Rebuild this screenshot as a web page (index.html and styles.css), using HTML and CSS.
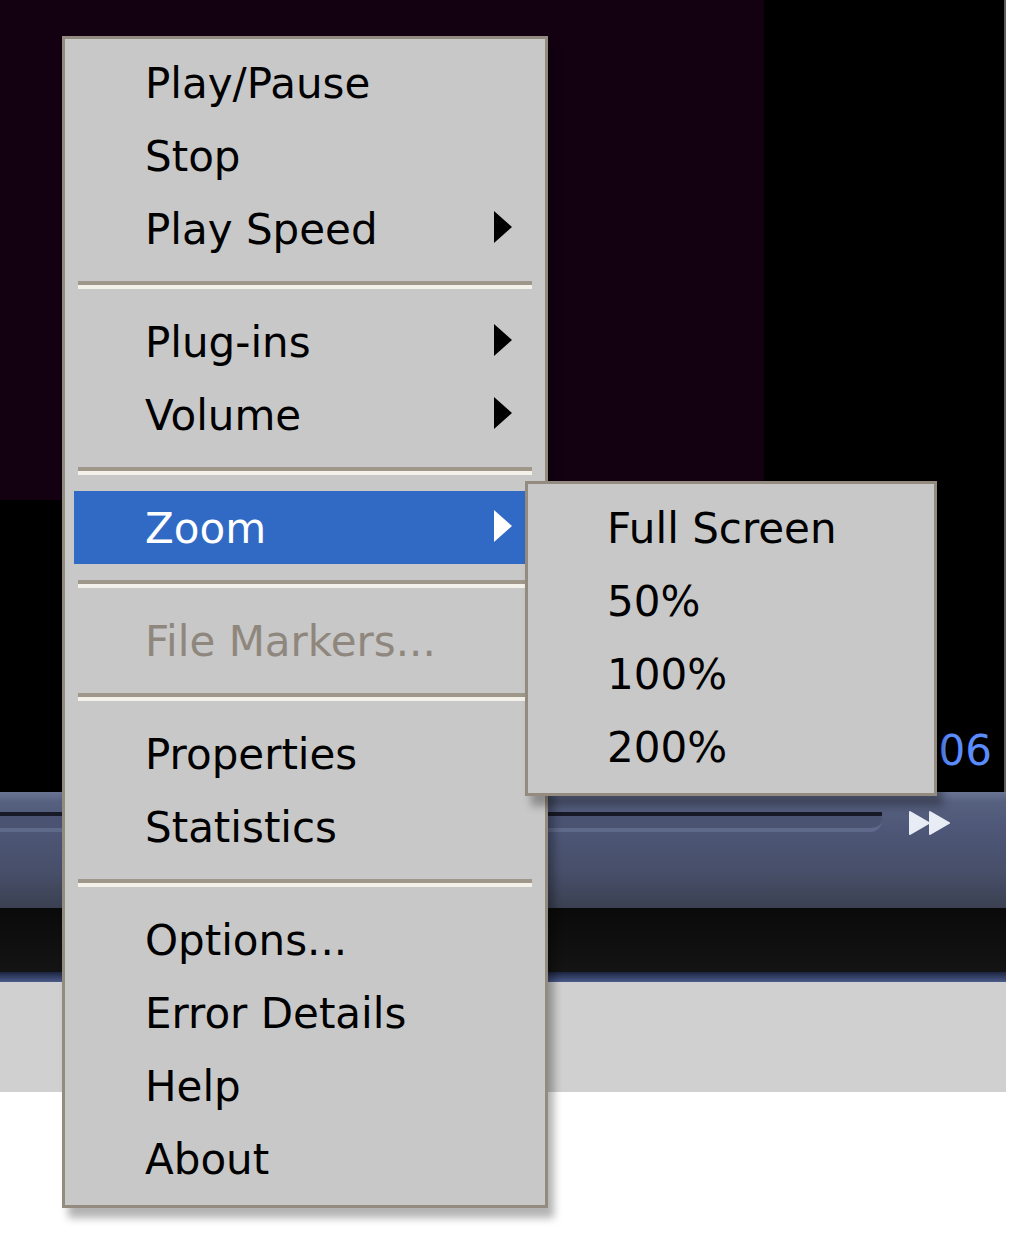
FILE: index.html
```html
<!DOCTYPE html>
<html lang="en">
<head>
    <meta charset="UTF-8">
    <meta name="viewport" content="width=device-width, initial-scale=1.0">
    <title>Player Menu</title>
    <link rel="stylesheet" href="styles.css">
</head>
<body>
    <!-- The player behind the menu -->
    <div class="player">
        <div class="screen">
            <div class="video"></div>
            <span class="time">00:06</span>
        </div>
        <div class="controls">
            <div class="seek"></div>
            <svg class="ff-icon" width="44" height="24" viewBox="0 0 44 24">
                <polygon points="2,1 21,12 2,23" fill="#e8ecf4" stroke="#e8ecf4" stroke-width="2" stroke-linejoin="round"/>
                <polygon points="22,1 41,12 22,23" fill="#e8ecf4" stroke="#e8ecf4" stroke-width="2" stroke-linejoin="round"/>
            </svg>
        </div>
        <div class="task-strip"></div>
        <div class="strip-edge"></div>
        <div class="status-area"></div>
    </div>

    <!-- Context menu -->
    <div class="menu main-menu">
        <div class="menu-item">Play/Pause</div>
        <div class="menu-item">Stop</div>
        <div class="menu-item has-sub">Play Speed
            <svg class="arrow" width="18" height="32" viewBox="0 0 18 32"><polygon points="0,0 18,16 0,32"/></svg>
        </div>
        <div class="separator"></div>
        <div class="menu-item has-sub">Plug-ins
            <svg class="arrow" width="18" height="32" viewBox="0 0 18 32"><polygon points="0,0 18,16 0,32"/></svg>
        </div>
        <div class="menu-item has-sub">Volume
            <svg class="arrow" width="18" height="32" viewBox="0 0 18 32"><polygon points="0,0 18,16 0,32"/></svg>
        </div>
        <div class="separator"></div>
        <div class="menu-item has-sub active">Zoom
            <svg class="arrow" width="18" height="32" viewBox="0 0 18 32"><polygon points="0,0 18,16 0,32"/></svg>
        </div>
        <div class="separator"></div>
        <div class="menu-item disabled">File Markers...</div>
        <div class="separator"></div>
        <div class="menu-item">Properties</div>
        <div class="menu-item">Statistics</div>
        <div class="separator"></div>
        <div class="menu-item">Options...</div>
        <div class="menu-item">Error Details</div>
        <div class="menu-item">Help</div>
        <div class="menu-item">About</div>
    </div>

    <!-- Zoom submenu -->
    <div class="menu sub-menu">
        <div class="menu-item">Full Screen</div>
        <div class="menu-item">50%</div>
        <div class="menu-item">100%</div>
        <div class="menu-item">200%</div>
    </div>
</body>
</html>
```

FILE: styles.css
```css
body {
    margin: 0;
    padding: 0;
    background-color: #ffffff;
    font-family: 'DejaVu Sans', 'Liberation Sans', sans-serif;
}
/* Player underneath the menu */
.player {
    width: 1006px;
}
.screen {
    position: relative;
    height: 792px;
    background-color: #000000;
    border-right: 2px solid #5c5c5c;
}
.video {
    width: 764px;
    height: 500px;
    background-color: #130011;
}
.time {
    position: absolute;
    top: 726px;
    right: 12px;
    font-size: 42px;
    color: #5a8cff;
}
.controls {
    display: flex;
    align-items: flex-start;
    gap: 26px;
    height: 116px;
    padding: 19px 54px 0 0;
    box-sizing: border-box;
    background: linear-gradient(#6a7594 0px, #56607f 10px, #4d5676 40px, #474f69 80px, #3b4152 116px);
}
.seek {
    flex: 1;
    height: 12px;
    margin-top: 1px;
    border-top: 4px solid #181b27;
    border-bottom: 4px solid #5f6a8a;
    border-radius: 0 0 12px 0;
    background-color: #4a5372;
}
.ff-icon {
    display: block;
}
.task-strip {
    height: 64px;
    background: linear-gradient(#0a0a0a, #141414);
}
.strip-edge {
    height: 10px;
    background: linear-gradient(#1c2540, #4a5a88);
}
.status-area {
    height: 110px;
    background-color: #d0d0d0;
}
/* Context menus, XP style */
.menu {
    position: absolute;
    box-sizing: border-box;
    background-color: #c8c8c8;
    border: 3px solid #938a80;
    padding: 7px 9px 10px 9px;
    box-shadow: 6px 10px 8px rgba(0, 0, 0, 0.3);
    font-size: 42px;
    color: #000000;
}
.main-menu {
    left: 62px;
    top: 36px;
    width: 486px;
}
.sub-menu {
    left: 525px;
    top: 481px;
    width: 412px;
    z-index: 2;
}
.sub-menu .menu-item {
    padding-left: 70px;
}
.menu-item {
    position: relative;
    height: 73px;
    line-height: 75px;
    padding-left: 71px;
    white-space: nowrap;
}
.menu-item.active {
    background-color: #316ac5;
    color: #ffffff;
}
.menu-item.disabled {
    color: #8f877d;
}
.arrow {
    position: absolute;
    right: 24px;
    top: 19px;
    fill: #000000;
}
.menu-item.active .arrow {
    fill: #ffffff;
}
.separator {
    height: 40px;
    margin: 0 4px;
    background: linear-gradient(transparent 16px, #a0978b 16px, #a0978b 20px, #f4f1ea 20px, #f4f1ea 24px, transparent 24px);
}
```
